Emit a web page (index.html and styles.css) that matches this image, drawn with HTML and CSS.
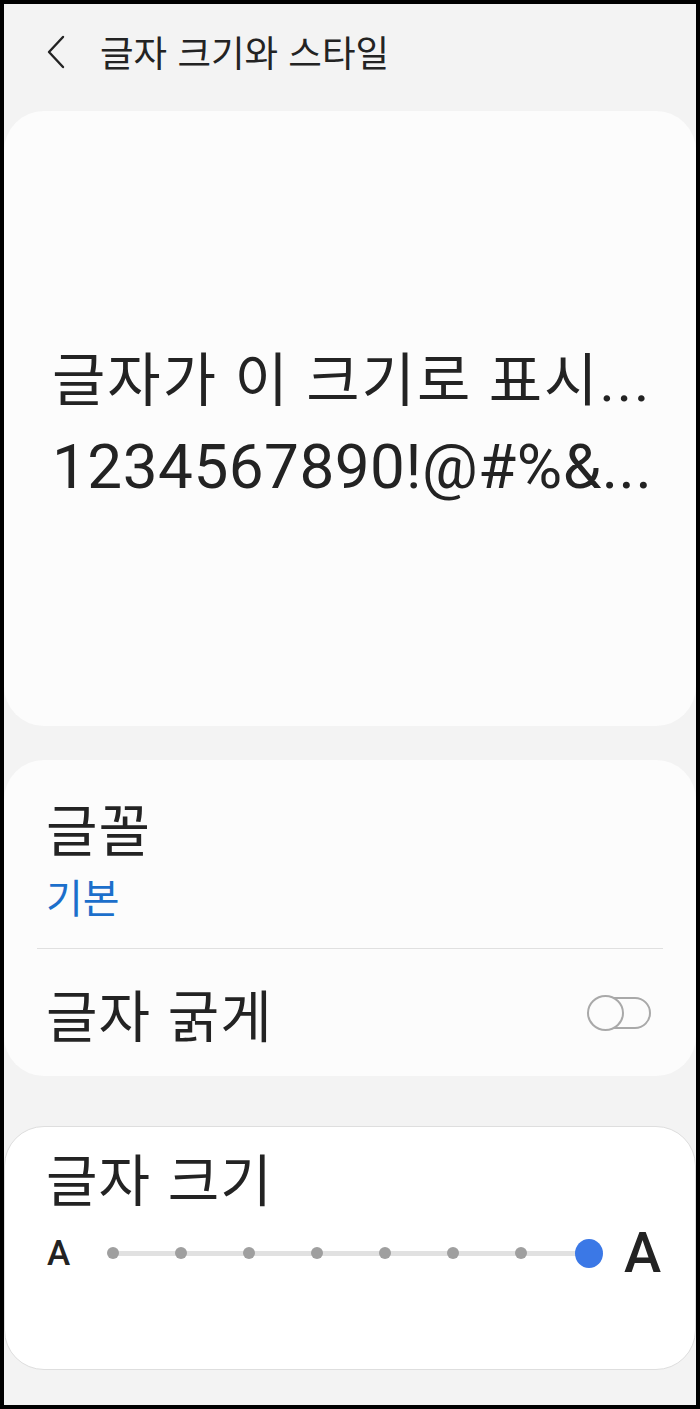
FILE: index.html
```html
<!DOCTYPE html>
<html lang="ko">

<head>
    <meta charset="UTF-8">
    <meta name="viewport" content="width=device-width, initial-scale=1.0">
    <title>글자 크기와 스타일</title>
    <link rel="stylesheet" href="styles.css">
</head>

<body>
    <div class="screen">
        <header class="top-bar">
            <button class="back" aria-label="뒤로">
                <svg width="20" height="34" viewBox="0 0 20 34">
                    <path d="M17 2 L3 17 L17 32" fill="none" stroke="#222" stroke-width="2.4" stroke-linecap="round" stroke-linejoin="round" />
                </svg>
            </button>
            <h1 class="title">글자 크기와 스타일</h1>
        </header>

        <section class="card preview">
            <div class="preview-ko">글자가 이 크기로 표시...</div>
            <div class="preview-num">1234567890!@#%&amp;...</div>
        </section>

        <section class="card settings">
            <div class="item font-item">
                <div class="item-title">글꼴</div>
                <div class="item-sub">기본</div>
            </div>
            <div class="divider"></div>
            <div class="item bold-item">
                <div class="item-title">글자 굵게</div>
                <div class="switch">
                    <span class="switch-thumb"></span>
                </div>
            </div>
        </section>

        <section class="card size-card">
            <div class="item-title">글자 크기</div>
            <div class="slider">
                <span class="a-small">A</span>
                <div class="track">
                    <span class="stop"><i class="dot"></i></span>
                    <span class="stop"><i class="dot"></i></span>
                    <span class="stop"><i class="dot"></i></span>
                    <span class="stop"><i class="dot"></i></span>
                    <span class="stop"><i class="dot"></i></span>
                    <span class="stop"><i class="dot"></i></span>
                    <span class="stop"><i class="dot"></i></span>
                    <span class="stop"><i class="thumb"></i></span>
                </div>
                <span class="a-big">A</span>
            </div>
        </section>
    </div>
</body>

</html>
```

FILE: styles.css
```css
* {
    box-sizing: border-box;
}

html,
body {
    margin: 0;
    background: #000;
}

body {
    padding: 4px;
    font-family: Roboto, "Noto Sans CJK KR", sans-serif;
    color: #232323;
}

.screen {
    height: 1401px;
    background: #f3f3f3;
    overflow: hidden;
}

/* top bar */
.top-bar {
    height: 107px;
    padding-bottom: 11px;
    display: flex;
    align-items: center;
}

.back {
    margin-left: 42px;
    padding: 0;
    border: 0;
    background: none;
    display: flex;
    align-items: center;
}

.title {
    margin: 0 0 0 34px;
    font-family: "Noto Sans CJK KR", sans-serif;
    font-size: 36.5px;
    font-weight: 400;
    line-height: 1;
}

/* cards */
.card {
    background: #fcfcfc;
    border-radius: 40px;
}

.preview {
    height: 615px;
    padding: 10px 0 0 48px;
    display: flex;
    flex-direction: column;
    justify-content: center;
    white-space: nowrap;
}

.preview-ko {
    font-size: 58px;
    line-height: 85px;
    letter-spacing: 2px;
}

.preview-num {
    font-size: 62px;
    line-height: 85px;
    letter-spacing: 0.5px;
}

.settings {
    margin-top: 34px;
    height: 316px;
}

.item-title {
    font-family: "Noto Sans CJK KR", sans-serif;
    font-size: 56px;
    line-height: 62px;
    letter-spacing: 1px;
}

.font-item {
    padding: 36px 0 28px 42px;
}

.item-sub {
    margin-top: 14px;
    font-family: "Noto Sans CJK KR", sans-serif;
    font-size: 40px;
    line-height: 48px;
    color: #1c6fcb;
}

.divider {
    height: 1px;
    margin: 0 33px;
    background: #e0e0e0;
}

.bold-item {
    height: 127px;
    padding: 0 45px 0 42px;
    display: flex;
    align-items: center;
    justify-content: space-between;
}

/* off switch */
.switch {
    position: relative;
    width: 64px;
    height: 34px;
}

.switch::before {
    content: "";
    position: absolute;
    left: 6px;
    right: 0;
    top: 1px;
    bottom: 1px;
    border: 2px solid #a9a9a9;
    border-radius: 16px;
}

.switch-thumb {
    position: absolute;
    left: 0;
    top: -1px;
    width: 37px;
    height: 36px;
    border: 2px solid #a9a9a9;
    border-radius: 50%;
    background: #fcfcfc;
}

/* size card */
.size-card {
    margin-top: 50px;
    height: 244px;
    padding-top: 19px;
    background: #fff;
    border: 1px solid #dedede;
}

.size-card .item-title {
    padding-left: 41px;
}

.slider {
    height: 90px;
    padding-left: 42px;
    display: flex;
    align-items: center;
}

.a-small {
    width: 52px;
    font-size: 35px;
    font-weight: 500;
}

.track {
    position: relative;
    width: 504px;
    display: flex;
    justify-content: space-between;
    align-items: center;
}

.track::before {
    content: "";
    position: absolute;
    left: 14px;
    right: 14px;
    top: 50%;
    height: 5px;
    margin-top: -2px;
    background: #e1e1e1;
}

.stop {
    position: relative;
    width: 28px;
    height: 28px;
    display: flex;
    align-items: center;
    justify-content: center;
}

.dot {
    width: 12px;
    height: 12px;
    border-radius: 50%;
    background: #9f9f9f;
}

.thumb {
    width: 29px;
    height: 29px;
    border-radius: 50%;
    background: #3b78e6;
}

.a-big {
    margin-left: 21px;
    font-size: 56px;
    font-weight: 500;
    line-height: 1;
}
```
